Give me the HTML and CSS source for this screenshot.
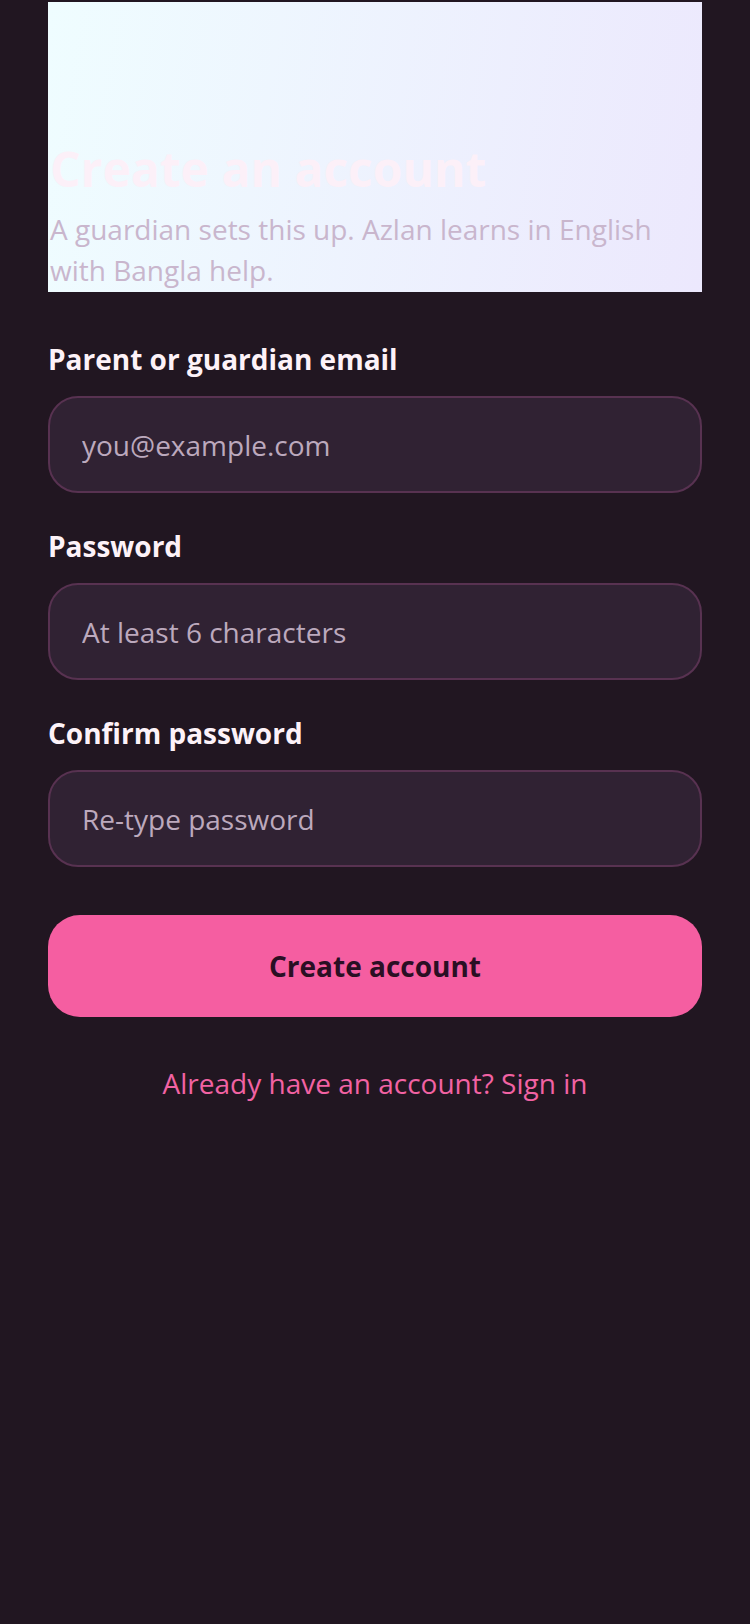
FILE: index.html
```html
<!DOCTYPE html>
<html lang="en">
<head>
    <meta charset="UTF-8">
    <meta name="viewport" content="width=device-width, initial-scale=1.0">
    <title>Create an account</title>
    <link rel="stylesheet" href="styles.css">
</head>
<body>

    <main class="page">
        <header class="hero">
            <h1>Create an account</h1>
            <p>A guardian sets this up. Azlan learns in English with Bangla help.</p>
        </header>

        <form class="signup-form" id="signup-form">
            <div class="field">
                <label for="email">Parent or guardian email</label>
                <input type="email" id="email" name="email" placeholder="you@example.com">
            </div>

            <div class="field">
                <label for="password">Password</label>
                <input type="password" id="password" name="password" placeholder="At least 6 characters">
            </div>

            <div class="field">
                <label for="confirm">Confirm password</label>
                <input type="password" id="confirm" name="confirm" placeholder="Re-type password">
            </div>

            <button type="submit" class="primary-button">Create account</button>
        </form>

        <a href="#" class="signin-link">Already have an account? Sign in</a>
    </main>

</body>
</html>
```

FILE: styles.css
```css
body {
    font-family: "Open Sans", "Noto Sans", sans-serif;
    background: #211621;
    margin: 0;
    padding: 0;
    color: #fdf2f8;
}

.page {
    padding: 2px 48px 40px;
    display: flex;
    flex-direction: column;
}

.hero {
    height: 290px;
    box-sizing: border-box;
    background: linear-gradient(100deg, #effdff, #ece8fd);
    display: flex;
    flex-direction: column;
    justify-content: flex-end;
    padding: 0 2px 1px;
}

.hero h1 {
    margin: 0 0 10px;
    font-size: 48px;
    font-weight: 700;
    line-height: 60px;
    color: #fcf0f8;
}

.hero p {
    margin: 0;
    font-size: 28px;
    line-height: 41px;
    color: #c9b6cd;
}

.signup-form {
    margin-top: 48px;
    display: flex;
    flex-direction: column;
    gap: 34px;
}

.field {
    display: flex;
    flex-direction: column;
    gap: 18px;
}

label {
    font-size: 28px;
    font-weight: 700;
    line-height: 38px;
    color: #fdf2f8;
}

input {
    height: 97px;
    box-sizing: border-box;
    padding: 0 32px;
    border: 2px solid #583251;
    border-radius: 30px;
    background: #302233;
    font-family: inherit;
    font-size: 28px;
    color: #fdf2f8;
    outline: none;
}

input::placeholder {
    color: #bca9bd;
}

.primary-button {
    margin-top: 14px;
    height: 102px;
    border: none;
    border-radius: 32px;
    background: #f55ea1;
    font-family: inherit;
    font-size: 28px;
    font-weight: 700;
    color: #2a0f24;
    cursor: pointer;
}

.signin-link {
    margin-top: 46px;
    text-align: center;
    font-size: 28px;
    line-height: 40px;
    color: #f262a3;
    text-decoration: none;
}
```
